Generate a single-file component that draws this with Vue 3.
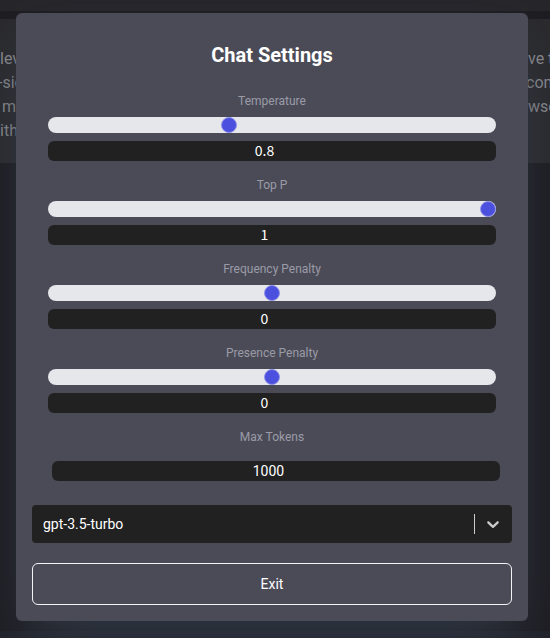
<script setup>
import { ref } from 'vue'

const sliders = ref([
  { id: 'temperature', label: 'Temperature', min: 0, max: 2, step: 0.1, value: 0.8 },
  { id: 'top-p', label: 'Top P', min: 0, max: 1, step: 0.1, value: 1 },
  { id: 'frequency', label: 'Frequency Penalty', min: -2, max: 2, step: 0.1, value: 0 },
  { id: 'presence', label: 'Presence Penalty', min: -2, max: 2, step: 0.1, value: 0 }
])
const maxTokens = ref(1000)
const model = ref('gpt-3.5-turbo')
</script>

<template>
  <div class="page">
    <div class="backdrop" aria-hidden="true">
      <div class="topbar"></div>
      <div class="message">
        <div class="left"><p>lev</p><p class="hang">-sid</p><p class="hang">&nbsp;m</p><p>ith</p></div>
        <div class="right"><p>ve t</p><p class="hang">con</p><p>wse</p></div>
      </div>
      <div class="rest"></div>
      <div class="footer"></div>
    </div>

    <main class="dialog" role="dialog" aria-labelledby="title">
      <h1 id="title">Chat Settings</h1>
      <div class="fields">
        <div v-for="s in sliders" :key="s.id" class="field">
          <label :for="s.id">{{ s.label }}</label>
          <input :id="s.id" v-model.number="s.value" class="range" type="range" :min="s.min" :max="s.max" :step="s.step">
          <input v-model.number="s.value" class="number small" type="number" :aria-label="s.label + ' value'" :min="s.min" :max="s.max" :step="s.step">
        </div>
        <div class="field">
          <label for="tokens">Max Tokens</label>
          <input id="tokens" v-model.number="maxTokens" class="number tokens" type="number">
        </div>
      </div>
      <div class="picker">
        <select v-model="model" aria-label="Model">
          <option>gpt-3.5-turbo</option>
        </select>
        <div class="indicator">
          <span class="divider"></span>
          <svg width="20" height="20" viewBox="0 0 20 20" aria-hidden="true">
            <path d="M4.516 7.548c0.436-0.446 1.043-0.481 1.576 0l3.908 3.747 3.908-3.747c0.533-0.481 1.141-0.446 1.574 0 0.436 0.445 0.408 1.197 0 1.615-0.406 0.418-4.695 4.502-4.695 4.502-0.217 0.223-0.502 0.335-0.787 0.335s-0.57-0.112-0.789-0.335c0 0-4.287-4.084-4.695-4.502s-0.436-1.17 0-1.615z" />
          </svg>
        </div>
      </div>
      <button class="exit" type="button">Exit</button>
    </main>
  </div>
</template>

<style>
body {
  background: #1e1d22;
}
</style>

<style scoped>
* {
  box-sizing: border-box;
}
.page {
  position: relative;
  min-height: 100vh;
  padding: 13px 22px 17px 16px;
  overflow: hidden;
  font-family: Roboto, "Liberation Sans", sans-serif;
  color: #fff;
}
.backdrop {
  position: absolute;
  inset: 0;
  display: flex;
  flex-direction: column;
  color: #8c8c90;
  font-size: 16px;
  line-height: 24px;
}
.topbar {
  height: 11px;
  background: #27262b;
}
.message {
  display: flex;
  justify-content: space-between;
  height: 144px;
  margin-top: 8px;
  padding-top: 28px;
  background: #2b2b2e;
}
.rest {
  flex: 1;
}
.footer {
  height: 7px;
  background: #22232b;
}
.left {
  width: 16px;
}
.right {
  width: 22px;
}
.backdrop p {
  margin: 0;
  white-space: nowrap;
}
.backdrop .hang {
  margin-left: -2px;
}
.dialog {
  position: relative;
  display: flex;
  flex-direction: column;
  padding: 16px;
  border-radius: 6px;
  background: #4b4b57;
  box-shadow: 0 25px 50px -12px rgba(52, 62, 76, 0.9);
}
h1 {
  margin: 12px 0 24px;
  font-size: 20px;
  line-height: 28px;
  font-weight: 700;
  text-align: center;
}
.fields {
  display: flex;
  flex-direction: column;
  gap: 16px;
  padding: 0 16px;
}
.field {
  display: flex;
  flex-direction: column;
  gap: 8px;
}
label {
  color: #9a9ba7;
  font-size: 12px;
  line-height: 16px;
  text-align: center;
}
input {
  width: 100%;
  margin: 0;
  padding: 0;
  border: 0;
}
.range {
  height: 16px;
  appearance: none;
  border-radius: 8px;
  background: #e5e7eb;
}
.range::-webkit-slider-thumb {
  appearance: none;
  width: 16px;
  height: 16px;
  border: 1px solid #8f92e6;
  border-radius: 50%;
  background: #4c50df;
}
.number {
  height: 20px;
  border-radius: 6px;
  background: #212121;
  color: #fff;
  font-family: Roboto, "Liberation Sans", sans-serif;
  font-size: 14px;
  line-height: 20px;
  text-align: center;
}
.small {
  padding-bottom: 2px;
  font-family: "Noto Sans CJK SC", "Noto Sans", sans-serif;
}
.tokens {
  margin: 8px 0 0 4px;
}
.picker {
  position: relative;
  margin-top: 24px;
}
select {
  display: block;
  width: 100%;
  height: 38px;
  padding: 0 48px 0 11px;
  appearance: none;
  border: 0;
  border-radius: 4px;
  background: #212121;
  color: #fff;
  font-family: Roboto, "Liberation Sans", sans-serif;
  font-size: 14px;
}
.indicator {
  position: absolute;
  top: 0;
  right: 9px;
  bottom: 0;
  display: flex;
  align-items: center;
  gap: 8px;
  pointer-events: none;
}
.divider {
  width: 1px;
  height: 20px;
  background: #ccc;
}
svg {
  fill: #ccc;
}
.exit {
  height: 42px;
  margin-top: 20px;
  border: 1px solid #f3f4f6;
  border-radius: 6px;
  background: transparent;
  color: #fff;
  font-family: Roboto, "Liberation Sans", sans-serif;
  font-size: 14px;
}
</style>
